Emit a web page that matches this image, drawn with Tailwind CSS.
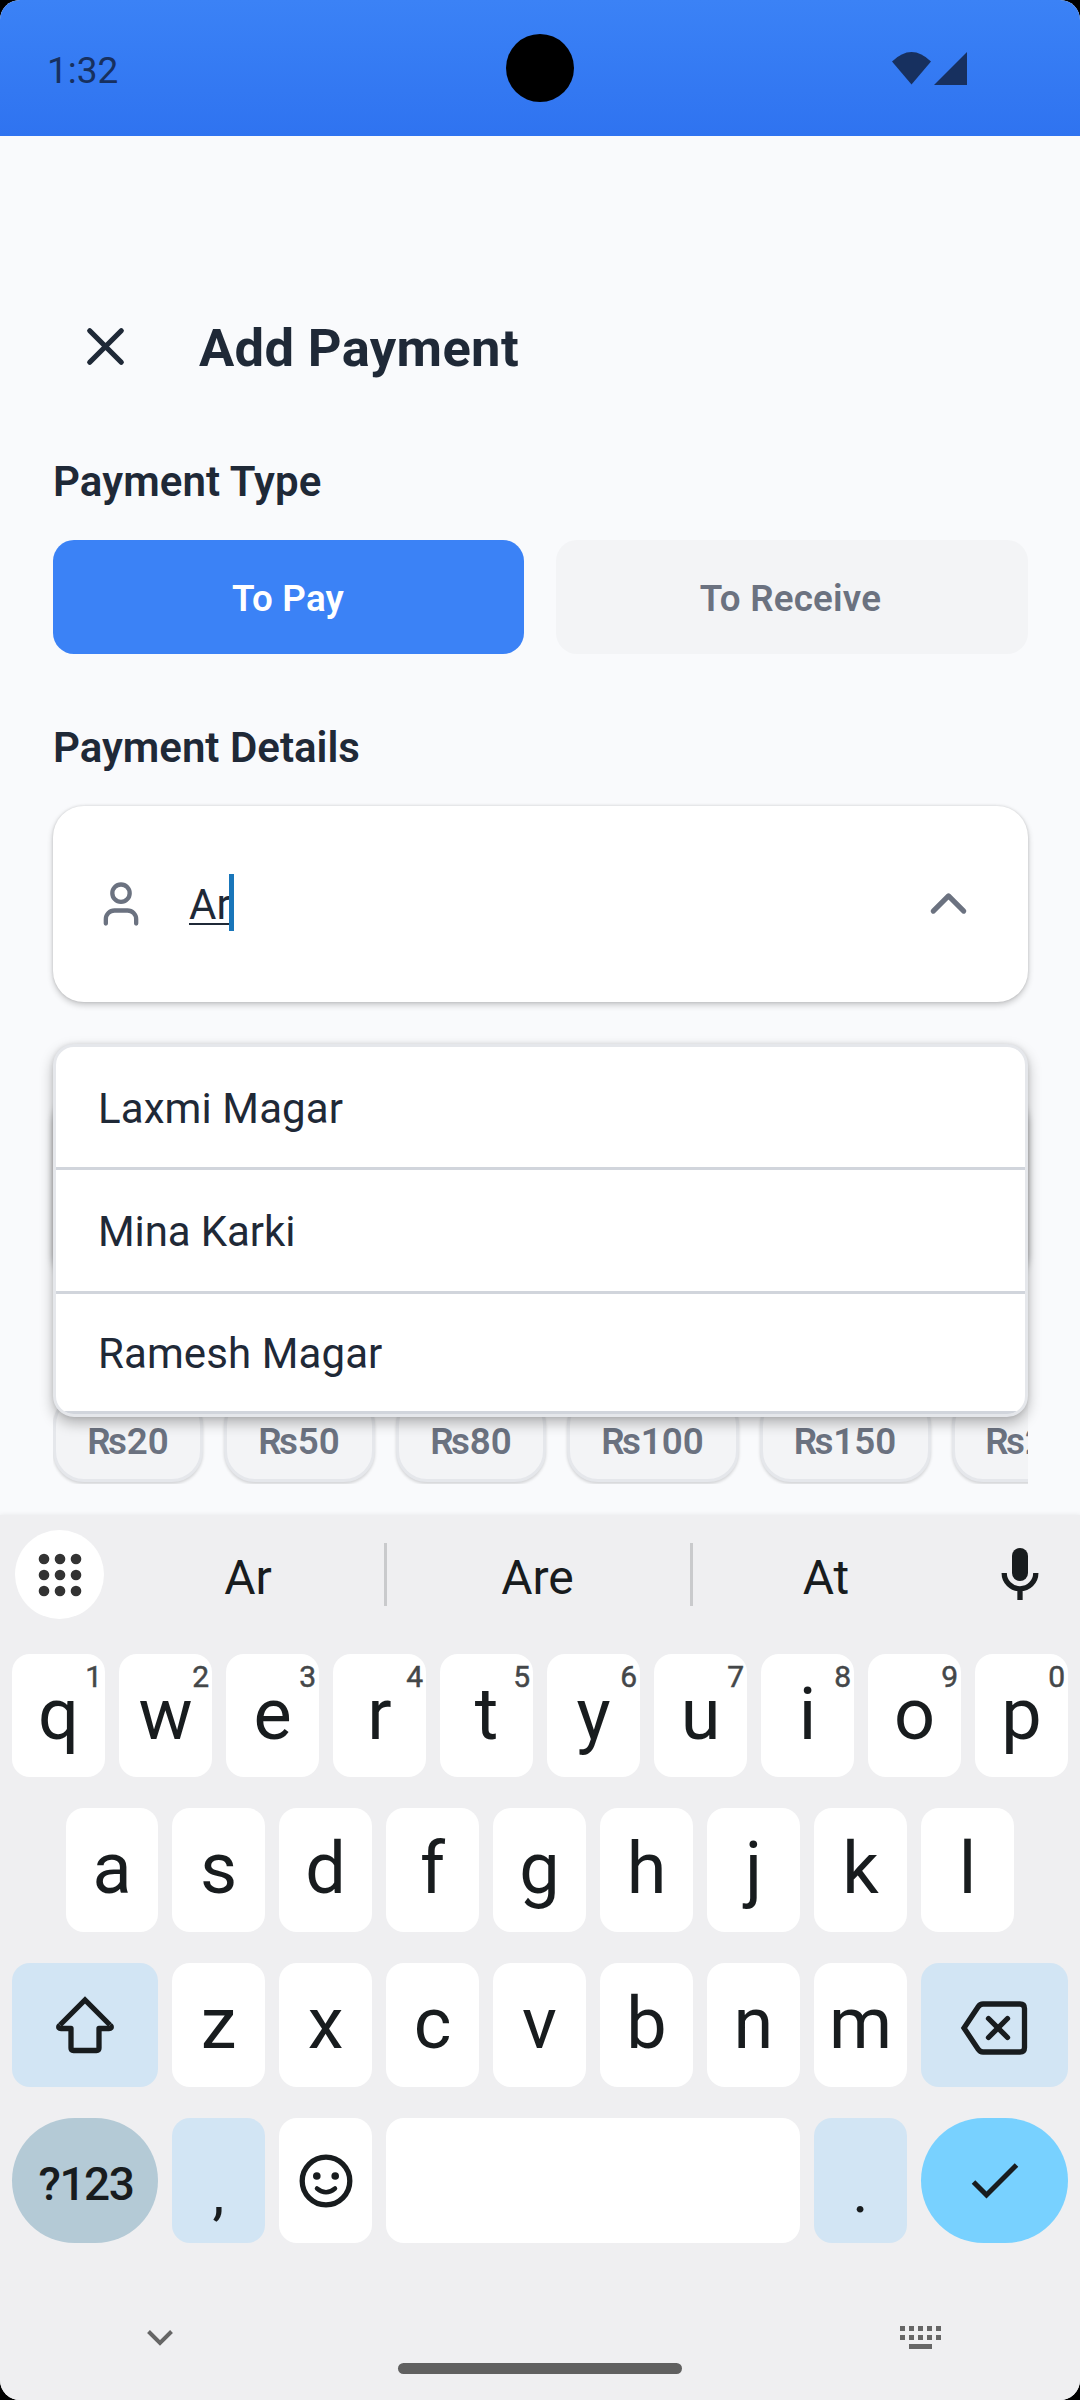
<!DOCTYPE html>
<html lang="en">
<head>
<meta charset="utf-8">
<title>Add Payment</title>
<script src="https://cdn.jsdelivr.net/npm/@tailwindcss/browser@4"></script>
</head>
<body class="bg-black">
<div class="relative flex h-[2400px] w-[1080px] flex-col overflow-hidden rounded-[20px] bg-[#f9fafc] font-['Roboto',sans-serif] text-[#1f2937]">

  <!-- Status bar -->
  <header class="relative flex h-[136px] shrink-0 items-center justify-between bg-linear-to-b from-[#3b82f6] to-[#2f73f0] pl-[47px] pr-[113px] text-[#17305f]">
    <span class="pt-1 text-[37px] leading-none">1:32</span>
    <div class="absolute left-[506px] top-[34px] size-[68px] rounded-full bg-black"></div>
    <svg class="h-[33px] w-[75px]" viewBox="0 0 75 33" fill="currentColor"><path d="M0 9.500Q19.500-9.500 39 9.500L19.500 32.500Z"/><path d="M75 0V33H42Z"/></svg>
  </header>

  <main class="flex h-[1379px] shrink-0 flex-col pl-[53px] pr-[52px]">
    <div class="mt-[179px] flex h-[63px] items-center">
      <svg class="ml-[21px] size-[63px]" viewBox="0 0 24 24" fill="none" stroke="currentColor" stroke-width="2" stroke-linecap="round"><path d="M18 6 6 18M6 6l12 12"/></svg>
      <h1 class="ml-[62px] pt-[3px] text-[52.500px] font-bold leading-[63px] tracking-[0.35px]">Add Payment</h1>
    </div>

    <h2 class="mt-[79px] text-[42px] font-semibold leading-[50px] tracking-[0.1px]">Payment Type</h2>
    <div class="mt-[33px] flex h-[114px] gap-8 text-[36.750px] font-semibold tracking-[0.2px]">
      <button class="w-[471px] rounded-[21px] bg-[#3b82f6] pr-px pt-1 text-white">To Pay</button>
      <button class="w-[472px] rounded-[21px] bg-gray-100 pr-[3px] pt-1 text-[#6b7280]">To Receive</button>
    </div>

    <h2 class="mt-[69px] text-[42px] font-semibold leading-[50px]">Payment Details</h2>
    <div class="mt-[33px] flex h-[196px] items-center rounded-[31px] bg-white pl-[42px] pr-[49px] shadow-[0_3px_6px_rgba(0,0,0,0.2),0_0_3px_rgba(0,0,0,0.14)]">
      <svg class="size-[52px] text-[#6b7280]" viewBox="0 0 24 24" fill="none" stroke="currentColor" stroke-width="2" stroke-linecap="round" stroke-linejoin="round"><path d="M19 21v-2a4 4 0 0 0-4-4H9a4 4 0 0 0-4 4v2"/><circle cx="12" cy="7" r="4"/></svg>
      <div class="ml-[42px] flex h-[57px] flex-1 items-start"><span class="text-[42px] leading-[57px] underline decoration-2 underline-offset-[4px]">Ar</span><span class="-ml-[2px] -mt-[2px] h-[57px] w-[5px] bg-[#1976ba]"></span></div>
      <svg class="mb-[2px] size-[61px] text-[#6b7280]" viewBox="0 0 24 24" fill="none" stroke="currentColor" stroke-width="2" stroke-linecap="round" stroke-linejoin="round"><path d="m18 15-6-6-6 6"/></svg>
    </div>

    <div class="relative mt-[88px] flex h-[394px] flex-col justify-end">
      <div class="absolute inset-x-0 top-0 h-[192px] rounded-[31px] bg-white shadow-[0_3px_7px_rgba(0,0,0,0.35)]"></div>
      <div class="flex h-[90px] shrink-0 items-start gap-[21px] overflow-hidden text-[36.750px] font-semibold text-[#6b7280]">
        <span class="h-[88px] w-[150px] shrink-0 rounded-[31px] border-[3px] border-gray-200 bg-gray-100 pt-[23px] text-center leading-[43px] shadow-[0_2px_3px_rgba(0,0,0,0.15)]">₨20</span>
        <span class="h-[88px] w-[151px] shrink-0 rounded-[31px] border-[3px] border-gray-200 bg-gray-100 pr-px pt-[23px] text-center leading-[43px] shadow-[0_2px_3px_rgba(0,0,0,0.15)]">₨50</span>
        <span class="h-[88px] w-[150px] shrink-0 rounded-[31px] border-[3px] border-gray-200 bg-gray-100 pt-[23px] text-center leading-[43px] shadow-[0_2px_3px_rgba(0,0,0,0.15)]">₨80</span>
        <span class="h-[88px] w-[172px] shrink-0 rounded-[31px] border-[3px] border-gray-200 bg-gray-100 pr-px pt-[23px] text-center leading-[43px] shadow-[0_2px_3px_rgba(0,0,0,0.15)]">₨100</span>
        <span class="h-[88px] w-[171px] shrink-0 rounded-[31px] border-[3px] border-gray-200 bg-gray-100 pr-px pt-[23px] text-center leading-[43px] shadow-[0_2px_3px_rgba(0,0,0,0.15)]">₨150</span>
        <span class="h-[88px] w-[171px] shrink-0 rounded-[31px] border-[3px] border-gray-200 bg-gray-100 pr-[2px] pt-[23px] text-center leading-[43px] shadow-[0_2px_3px_rgba(0,0,0,0.15)]">₨200</span>
      </div>
      <!-- Name suggestions, over the fields below the input -->
      <ul class="absolute inset-x-0 -top-[46px] h-[373px] overflow-hidden rounded-[21px] border-[3px] border-gray-200 bg-white text-[42px] leading-[49px] shadow-[0_6px_14px_rgba(0,0,0,0.28),0_0_5px_rgba(0,0,0,0.1)]">
        <li class="h-[123px] border-b-[3px] border-gray-300 pl-[42px] pt-[37px] tracking-[0.1px]">Laxmi Magar</li>
        <li class="h-[124px] border-b-[3px] border-gray-300 pl-[42px] pt-[37px] tracking-[-0.1px]">Mina Karki</li>
        <li class="h-[120px] border-b-[3px] border-gray-300 pl-[42px] pt-[35px] tracking-[0.1px]">Ramesh Magar</li>
      </ul>
    </div>
  </main>

  <!-- Keyboard -->
  <section class="flex flex-1 flex-col bg-[#efeff1] text-[#181c1e] shadow-[0_0_5px_rgba(0,0,0,0.08)]">
    <div class="flex h-[119px] items-center pl-[15px]">
      <div class="grid size-[89px] place-items-center rounded-full bg-white">
        <svg class="size-[44px]" viewBox="0 0 44 44" fill="#333"><circle cx="6" cy="6" r="5.300"/><circle cx="22" cy="6" r="5.300"/><circle cx="38" cy="6" r="5.300"/><circle cx="6" cy="22" r="5.300"/><circle cx="22" cy="22" r="5.300"/><circle cx="38" cy="22" r="5.300"/><circle cx="6" cy="38" r="5.300"/><circle cx="22" cy="38" r="5.300"/><circle cx="38" cy="38" r="5.300"/></svg>
      </div>
      <div class="ml-2 w-[272px] pt-[6px] text-center text-[48px] leading-none">Ar</div>
      <div class="h-[63px] w-[3px] bg-[#c9cacc]"></div>
      <div class="w-[303px] pr-[2px] pt-[6px] text-center text-[48px] leading-none">Are</div>
      <div class="h-[63px] w-[3px] bg-[#c9cacc]"></div>
      <div class="w-[266px] pt-[6px] text-center text-[48px] leading-none">At</div>
      <svg class="ml-[42px] mb-px h-[52px] w-[38px]" viewBox="0 0 38 52"><rect x="11" y="0" width="16" height="33" rx="8" fill="currentColor"/><path d="M3.200 25a15.800 15.800 0 0 0 31.600 0M19 41v11" fill="none" stroke="currentColor" stroke-width="5.300"/></svg>
    </div>

    <div id="keys" class="mt-5 flex flex-col gap-[31px] px-3 text-[72px] leading-none"></div>

    <div class="relative flex-1 text-[#666]">
      <svg class="absolute left-[147px] top-[86px] h-[18px] w-[26px]" viewBox="0 0 26 18" fill="none" stroke="currentColor" stroke-width="4"><path d="m1.500 2.500 11.500 11.500 11.500-11.500"/></svg>
      <svg class="absolute left-[900px] top-[83px] h-[24px] w-[41px]" viewBox="0 0 41 24" fill="none" stroke="currentColor" stroke-width="5"><path d="M0 2.500h41M0 11.500h41" stroke-dasharray="5 4"/><path d="M9 20.500h23"/></svg>
      <div class="absolute left-[398px] top-[120px] h-[11px] w-[284px] rounded-full bg-[#606060]"></div>
    </div>
  </section>
</div>

<script>
const icons = {
  shift: '<svg class="h-[60px] w-[60px]" viewBox="0 0 60 60" fill="none" stroke="currentColor" stroke-width="5.300" stroke-linejoin="round"><path stroke-linejoin="miter" d="M5 30 30 5 55 30"/><path d="M5 30 4 31Q3 33.500 6 33.500H16V53Q16 55.500 18.500 55.500H41.500Q44 55.500 44 53V33.500H54Q57 33.500 56 31L55 30"/></svg>',
  back: '<svg class="h-[54px] w-[68px]" viewBox="0 0 68 54" fill="none" stroke="currentColor" stroke-width="5.300" stroke-linecap="round"><path d="M23 3H60Q64.500 3 64.500 7.500V46.500Q64.500 51 60 51H23Q20 51 18 48L4 27 18 6Q20 3 23 3Z"/><path d="m28.500 17.500 19 19m0-19-19 19"/></svg>',
  smile: '<svg class="size-[54px]" viewBox="0 0 54 54" fill="none" stroke="currentColor" stroke-width="5.300" stroke-linecap="round"><circle cx="27" cy="27" r="23.800"/><path d="M18 34.500Q27 42 36 34.500" stroke-width="4.500"/><circle cx="17.800" cy="22" r="3.800" fill="currentColor" stroke="none"/><circle cx="36.200" cy="22" r="3.800" fill="currentColor" stroke="none"/></svg>',
  check: '<svg class="h-[36px] w-[48px]" viewBox="0 0 48 36" fill="none" stroke="currentColor" stroke-width="5"><path d="M2.500 19 15.500 32 45.500 2"/></svg>'
};
const key = (c, hint = '', width = 'w-[93px]') => `<div class="relative flex h-full ${width} items-center justify-center rounded-[18px] bg-white pb-[2px]">${hint && `<span class="absolute right-[3px] top-[5px] text-[30px] leading-[36px] text-[#444749] [-webkit-text-stroke:0.5px_#444749]">${hint}</span>`}${c}</div>`;
const rows = [
  [...'qwertyuiop'].map((c, i) => key(c, String((i + 1) % 10))).join(''),
  [...'asdfghjkl'].map((c, i) => key(c, '', i ? 'w-[93px]' : 'w-[92px]')).join(''),
  `<div class="flex w-[146px] items-center justify-center rounded-[18px] bg-[#d2e5f4]">${icons.shift}</div>` + [...'zxcvbnm'].map(c => key(c)).join('') + `<div class="flex w-[147px] items-center justify-center rounded-[18px] bg-[#d2e5f4] pr-[2px] pt-[5px]">${icons.back}</div>`,
  `<div class="flex w-[146px] items-center justify-center rounded-full bg-[#b4cad6] pl-[2px] pt-[6px] text-[46px] font-medium tracking-[-1.500px]">?123</div><div class="flex w-[93px] items-center justify-center rounded-[18px] bg-[#d2e5f4] pt-[24px] text-[60px]">,</div><div class="flex w-[93px] items-center justify-center rounded-[18px] bg-white">${icons.smile}</div><div class="w-[414px] rounded-[18px] bg-white"></div><div class="flex w-[93px] items-center justify-center rounded-[18px] bg-[#d2e5f4] pt-[22px] text-[60px]">.</div><div class="flex w-[147px] items-center justify-center rounded-full bg-[#78d1ff]">${icons.check}</div>`
];
document.getElementById('keys').innerHTML = rows.map((r, i) => `<div class="flex ${i === 3 ? 'h-[125px]' : i ? 'h-[124px]' : 'h-[123px]'} justify-center gap-[14px]">${r}</div>`).join('');
</script>
</body>
</html>
